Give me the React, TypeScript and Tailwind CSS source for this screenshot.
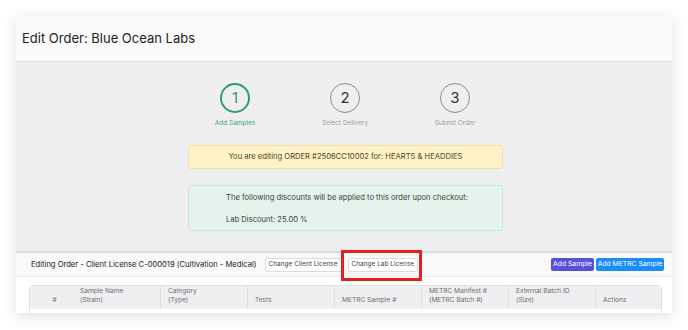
const steps = [
  { n: "1", label: "Add Samples", active: true },
  { n: "2", label: "Select Delivery", active: false },
  { n: "3", label: "Submit Order", active: false },
];

const columns = [
  { top: "Sample Name", bottom: "(Strain)" },
  { top: "Category", bottom: "(Type)" },
  { top: "", bottom: "Tests" },
  { top: "", bottom: "METRC Sample #" },
  { top: "METRC Manifest #", bottom: "(METRC Batch #)" },
  { top: "External Batch ID", bottom: "(Size)" },
];

const App = () => {
  return (
    <div
      className="relative w-[688px] h-[330px] bg-white pt-[16px] pl-[16px] overflow-hidden"
      style={{ fontFamily: "Inter, 'Liberation Sans', sans-serif" }}
    >
      <div className="w-[656px] h-[297px] rounded-[4px] bg-white shadow-[0_3px_14px_rgba(0,0,0,0.13)] overflow-hidden flex flex-col">
        {/* page header */}
        <div className="h-[46px] shrink-0 bg-[#fafafa] border-b border-[#e1e1e4] flex items-center pl-[6px]">
          <h1 className="text-[13px] text-[#222] leading-none">Edit Order: Blue Ocean Labs</h1>
        </div>

        {/* steps + notices */}
        <div className="h-[189px] shrink-0 bg-[#efeff1] flex flex-col items-center pt-[21px]">
          <div className="flex gap-[80px] ml-[2px]">
            {steps.map((s) => (
              <div key={s.n} className="w-[30px] flex flex-col items-center">
                <div
                  className={
                    s.active
                      ? "w-[30px] h-[30px] rounded-full border-2 border-[#2a9d78] flex items-center justify-center text-[15px] text-[#2a9d78]"
                      : "w-[30px] h-[30px] rounded-full border border-[#8c8c8c] flex items-center justify-center text-[15px] text-[#333]"
                  }
                >
                  {s.n}
                </div>
                <div
                  className={
                    s.active
                      ? "mt-[6px] whitespace-nowrap text-[6.5px] text-[#3aa884]"
                      : "mt-[6px] whitespace-nowrap text-[6.5px] text-[#9d9d9d]"
                  }
                >
                  {s.label}
                </div>
              </div>
            ))}
          </div>

          <div className="mt-[16px] ml-[3px] w-[315px] h-[24px] rounded-[3px] bg-[#fdf3c6] border border-[#f3e196] flex items-center justify-center text-[7.6px] text-[#4d4427]">
            You are editing ORDER #2506CC10002 for: HEARTS &amp; HEADDIES
          </div>

          <div className="mt-[16px] ml-[3px] w-[315px] h-[46px] rounded-[3px] bg-[#e4f4ec] border border-[#c5e6d6] pl-[37px] pt-[6px] text-[7.6px] text-[#38433d]">
            <p>The following discounts will be applied to this order upon checkout:</p>
            <p className="mt-[11px]">Lab Discount: 25.00 %</p>
          </div>
        </div>

        {/* samples section */}
        <div className="flex-1 border-t-2 border-[#dcdce0] bg-white">
          <div className="h-[24px] bg-[#f9f9fa] border-b border-[#ececee] flex items-center pl-[15px] pr-[8px]">
            <span className="text-[7.6px] text-[#222]">
              Editing Order - Client License C-000019 (Cultivation - Medical)
            </span>
            <button className="ml-[8px] h-[14px] px-[3px] rounded-[2px] border border-[#dcdcdc] bg-white text-[6.5px] text-[#444]">
              Change Client License
            </button>
            <button className="ml-[6px] h-[14px] px-[3px] rounded-[2px] border border-[#dcdcdc] bg-white text-[6.5px] text-[#444]">
              Change Lab License
            </button>
            <div className="ml-auto flex gap-[2px]">
              <button className="h-[13px] w-[43px] rounded-[2px] bg-[#5a4fd9] text-[6.8px] text-white">
                Add Sample
              </button>
              <button className="h-[13px] w-[68px] rounded-[2px] bg-[#1a8cfb] text-[6.8px] text-white">
                Add METRC Sample
              </button>
            </div>
          </div>

          <div className="ml-[13px] mr-[10px] mt-[8px] rounded-t-[4px] border border-[#e0e0e3] overflow-hidden">
            <div className="h-[23px] bg-[#efeff1] flex text-[6.6px] text-[#6d6d70] leading-[9px]">
              <div className="w-[43px] flex items-end justify-center pb-[4px] pl-[6px]">#</div>
              {columns.map((c, i) => (
                <div
                  key={i}
                  className={
                    i === 0
                      ? "w-[87px] flex flex-col justify-end pb-[4px] pl-[7px]"
                      : "w-[87px] flex flex-col justify-end pb-[4px] pl-[7px] border-l border-[#e0e0e3]"
                  }
                >
                  {c.top ? <span>{c.top}</span> : null}
                  <span>{c.bottom}</span>
                </div>
              ))}
              <div className="flex-1 flex flex-col justify-end pb-[4px] pl-[7px] border-l border-[#e0e0e3]">
                <span>Actions</span>
              </div>
            </div>
            <div className="h-[10px] bg-white" />
          </div>
        </div>
      </div>

      {/* highlight annotation */}
      <div className="absolute left-[341px] top-[250px] w-[81px] h-[31px] border-[3px] border-[#e3201b]" />
    </div>
  );
};

export default App;
